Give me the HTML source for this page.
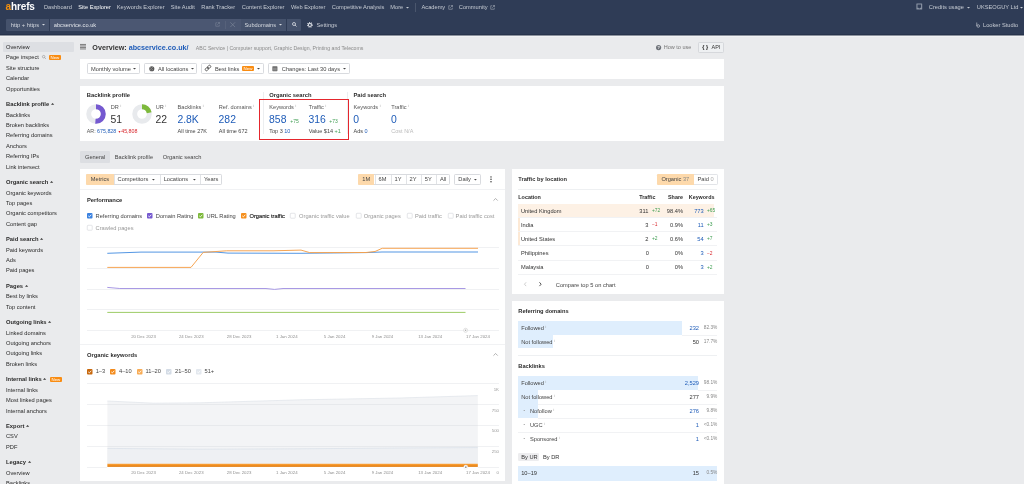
<!DOCTYPE html>
<html><head><meta charset="utf-8">
<style>
*{box-sizing:border-box;margin:0;padding:0}
html,body{width:1024px;height:484px;overflow:hidden;background:#eaebed;font-family:"Liberation Sans",sans-serif;color:#333;font-size:5.7px}
.a{position:absolute}
.t{position:absolute;white-space:nowrap;line-height:8px;height:8px}
.b{font-weight:bold}
.nv{color:#c6cbd3}
.sb{color:#2a2a2a}
.h{font-weight:bold;color:#2b2b2b}
.blue{color:#1f5cb8}
.green{color:#3f9e52}
.red{color:#d8262c}
.gray{color:#999}
.dk{color:#333}
.btn{position:absolute;background:#fff;border:0.6px solid #d9dbdf;border-radius:1.2px}
.badge{position:absolute;background:#f98c12;color:#fff;border-radius:1px;font-size:4.4px;line-height:5.6px;height:5.6px;text-align:center}
.cb{position:absolute;width:5.5px;height:5.5px;border-radius:1px}
.cbo{position:absolute;width:5.5px;height:5.5px;border-radius:1px;border:0.6px solid #cfd2d6;background:#fff}
svg{position:absolute;overflow:visible}
</style></head><body>
<div id="root" style="position:absolute;left:0;top:0;width:1024px;height:484px;will-change:transform">
<div class="a" style="left:0px;top:0px;width:1024.00px;height:35.00px;background:#2f3c56;"></div>
<div class="t b" style="left:5.6px;top:1.6px;font-size:10px;line-height:10px;height:10px;color:#fff;letter-spacing:-0.15px"><span style="color:#f5900c">a</span>hrefs</div>
<div class="t nv" style="left:44px;top:3.20px;">Dashboard</div>
<div class="t nv" style="left:78.3px;top:3.20px;color:#fff">Site Explorer</div>
<div class="t nv" style="left:116.8px;top:3.20px;">Keywords Explorer</div>
<div class="t nv" style="left:170.8px;top:3.20px;">Site Audit</div>
<div class="t nv" style="left:201.3px;top:3.20px;">Rank Tracker</div>
<div class="t nv" style="left:241.8px;top:3.20px;">Content Explorer</div>
<div class="t nv" style="left:291px;top:3.20px;">Web Explorer</div>
<div class="t nv" style="left:331.8px;top:3.20px;">Competitive Analysis</div>
<div class="t nv" style="left:390.3px;top:3.20px;">More</div>
<div class="t nv" style="left:421.5px;top:3.20px;">Academy</div>
<div class="t nv" style="left:458.8px;top:3.20px;">Community</div>
<div class="t nv" style="left:928.8px;top:3.20px;">Credits usage</div>
<div class="t nv" style="left:976.8px;top:3.20px;">UKSEOGUY Ltd</div>
<svg style="left:405.5px;top:7.0px" width="3.0" height="1.6"><path d="M0 0H3.0L1.5 1.6Z" fill="#c6cbd3"/></svg>
<div class="a" style="left:415px;top:3px;width:0.70px;height:9.00px;background:#4a566d;"></div>
<svg style="left:447.8px;top:5px" width="5" height="5" viewBox="0 0 10 10"><path d="M4 1.5H1.5V8.5H8.5V6" fill="none" stroke="#aab0bb" stroke-width="1.1"/><path d="M5.5 1H9V4.5M9 1L4.5 5.5" fill="none" stroke="#aab0bb" stroke-width="1.1"/></svg>
<svg style="left:489.5px;top:5px" width="5" height="5" viewBox="0 0 10 10"><path d="M4 1.5H1.5V8.5H8.5V6" fill="none" stroke="#aab0bb" stroke-width="1.1"/><path d="M5.5 1H9V4.5M9 1L4.5 5.5" fill="none" stroke="#aab0bb" stroke-width="1.1"/></svg>
<svg style="left:967.0px;top:7.0px" width="3.0" height="1.6"><path d="M0 0H3.0L1.5 1.6Z" fill="#c6cbd3"/></svg>
<svg style="left:1020.3px;top:7.0px" width="3.0" height="1.6"><path d="M0 0H3.0L1.5 1.6Z" fill="#c6cbd3"/></svg>
<svg style="left:915.6px;top:3px" width="6.6" height="7" viewBox="0 0 66 70"><path d="M8 4H58Q62 4 62 8V62Q62 66 58 66H8Q4 66 4 62V8Q4 4 8 4Z M15 16V48H24Q26 55 33 55Q40 55 42 48H51V16Z" fill="#8d96a6" fill-rule="evenodd"/></svg>
<div class="a" style="left:6px;top:18.6px;width:43.00px;height:12.00px;background:#45526c;border-radius:1.2px 0 0 1.2px"></div>
<div class="t nv" style="left:10.8px;top:20.50px;color:#d5d9df">http + https</div>
<svg style="left:41.5px;top:23.9px" width="3.0" height="1.6"><path d="M0 0H3.0L1.5 1.6Z" fill="#d5d9df"/></svg>
<div class="a" style="left:49.6px;top:18.6px;width:191.40px;height:12.00px;background:#4b5772;"></div>
<div class="t nv" style="left:53.8px;top:20.50px;color:#e2e5ea">abcservice.co.uk</div>
<svg style="left:214.5px;top:22.3px" width="5" height="5" viewBox="0 0 10 10"><path d="M4 1.5H1.5V8.5H8.5V6" fill="none" stroke="#7d879a" stroke-width="1.1"/><path d="M5.5 1H9V4.5M9 1L4.5 5.5" fill="none" stroke="#7d879a" stroke-width="1.1"/></svg>
<div class="a" style="left:225px;top:21px;width:0.60px;height:7.60px;background:#56617a;"></div>
<svg style="left:229.6px;top:22.2px" width="5.4" height="5.4" viewBox="0 0 8 8"><path d="M0.5 0.5L7.5 7.5M7.5 0.5L0.5 7.5" stroke="#7f899b" stroke-width="0.9"/></svg>
<div class="a" style="left:241.3px;top:18.6px;width:45.00px;height:12.00px;background:#45526c;"></div>
<div class="t nv" style="left:244.5px;top:20.50px;color:#d5d9df">Subdomains</div>
<svg style="left:278.5px;top:23.9px" width="3.0" height="1.6"><path d="M0 0H3.0L1.5 1.6Z" fill="#d5d9df"/></svg>
<div class="a" style="left:286.9px;top:18.6px;width:14.10px;height:12.00px;background:#45526c;border-radius:0 1.2px 1.2px 0"></div>
<svg style="left:291.6px;top:22.2px" width="5" height="5" viewBox="0 0 10 10"><circle cx="4" cy="4" r="3" fill="none" stroke="#e6e8ec" stroke-width="1.5"/><path d="M6.2 6.2L9 9" stroke="#e6e8ec" stroke-width="1.6"/></svg>
<svg style="left:307.3px;top:21.7px" width="5.8" height="5.8" viewBox="0 0 10 10"><circle cx="5" cy="5" r="4.1" fill="none" stroke="#d2d6dd" stroke-width="1.8" stroke-dasharray="1.6 1.62"/><circle cx="5" cy="5" r="2.7" fill="none" stroke="#d2d6dd" stroke-width="2"/></svg>
<div class="t nv" style="left:316.5px;top:20.50px;">Settings</div>
<svg style="left:975.6px;top:21.6px" width="4" height="6" viewBox="0 0 8 12"><circle cx="4.5" cy="8" r="2.6" fill="none" stroke="#c6cbd3" stroke-width="1.3"/><path d="M1.5 1V8" stroke="#c6cbd3" stroke-width="1.3"/></svg>
<div class="t nv" style="left:983px;top:20.50px;">Looker Studio</div>
<div class="a" style="left:0px;top:34px;width:1024.00px;height:1.00px;background:#27334c;"></div>
<div class="a" style="left:0px;top:35px;width:1024.00px;height:1.00px;background:#8d939e;"></div>
<div class="a" style="left:0px;top:36px;width:1024.00px;height:1.00px;background:#f1f2f4;"></div>
<div class="a" style="left:3px;top:42.2px;width:70.50px;height:9.80px;background:#dddfe3;border-radius:1px"></div>
<div class="t sb" style="left:6px;top:43.00px;">Overview</div>
<div class="t sb" style="left:6px;top:53.42px;">Page inspect</div>
<svg style="left:41.8px;top:55.22px" width="4.2" height="4.2" viewBox="0 0 10 10"><circle cx="4" cy="4" r="3" fill="none" stroke="#888" stroke-width="1.3"/><path d="M6.2 6.2L9.2 9.2" stroke="#888" stroke-width="1.4"/></svg>
<div class="badge" style="left:48.8px;top:54.72px;width:12.2px">New</div>
<div class="t sb" style="left:6px;top:63.84px;">Site structure</div>
<div class="t sb" style="left:6px;top:74.26px;">Calendar</div>
<div class="t sb" style="left:6px;top:84.68px;">Opportunities</div>
<div class="t h" style="font-size:5.8px;left:6px;top:100.13px;">Backlink profile<svg style="position:relative;display:inline-block;margin-left:1.6px;top:-1.3px" width="3.2" height="1.8"><path d="M0 1.8H3.2L1.6 0Z" fill="#333"/></svg></div>
<div class="t sb" style="left:6px;top:110.55px;">Backlinks</div>
<div class="t sb" style="left:6px;top:120.97px;">Broken backlinks</div>
<div class="t sb" style="left:6px;top:131.39px;">Referring domains</div>
<div class="t sb" style="left:6px;top:141.81px;">Anchors</div>
<div class="t sb" style="left:6px;top:152.23px;">Referring IPs</div>
<div class="t sb" style="left:6px;top:162.65px;">Link intersect</div>
<div class="t h" style="font-size:5.8px;left:6px;top:178.10px;">Organic search<svg style="position:relative;display:inline-block;margin-left:1.6px;top:-1.3px" width="3.2" height="1.8"><path d="M0 1.8H3.2L1.6 0Z" fill="#333"/></svg></div>
<div class="t sb" style="left:6px;top:188.52px;">Organic keywords</div>
<div class="t sb" style="left:6px;top:198.94px;">Top pages</div>
<div class="t sb" style="left:6px;top:209.36px;">Organic competitors</div>
<div class="t sb" style="left:6px;top:219.78px;">Content gap</div>
<div class="t h" style="font-size:5.8px;left:6px;top:235.23px;">Paid search<svg style="position:relative;display:inline-block;margin-left:1.6px;top:-1.3px" width="3.2" height="1.8"><path d="M0 1.8H3.2L1.6 0Z" fill="#333"/></svg></div>
<div class="t sb" style="left:6px;top:245.65px;">Paid keywords</div>
<div class="t sb" style="left:6px;top:256.07px;">Ads</div>
<div class="t sb" style="left:6px;top:266.49px;">Paid pages</div>
<div class="t h" style="font-size:5.8px;left:6px;top:281.94px;">Pages<svg style="position:relative;display:inline-block;margin-left:1.6px;top:-1.3px" width="3.2" height="1.8"><path d="M0 1.8H3.2L1.6 0Z" fill="#333"/></svg></div>
<div class="t sb" style="left:6px;top:292.36px;">Best by links</div>
<div class="t sb" style="left:6px;top:302.78px;">Top content</div>
<div class="t h" style="font-size:5.8px;left:6px;top:318.23px;">Outgoing links<svg style="position:relative;display:inline-block;margin-left:1.6px;top:-1.3px" width="3.2" height="1.8"><path d="M0 1.8H3.2L1.6 0Z" fill="#333"/></svg></div>
<div class="t sb" style="left:6px;top:328.65px;">Linked domains</div>
<div class="t sb" style="left:6px;top:339.07px;">Outgoing anchors</div>
<div class="t sb" style="left:6px;top:349.49px;">Outgoing links</div>
<div class="t sb" style="left:6px;top:359.91px;">Broken links</div>
<div class="t h" style="font-size:5.8px;left:6px;top:375.36px;">Internal links<svg style="position:relative;display:inline-block;margin-left:1.6px;top:-1.3px" width="3.2" height="1.8"><path d="M0 1.8H3.2L1.6 0Z" fill="#333"/></svg></div>
<div class="badge" style="left:49.8px;top:376.66px;width:12.2px">New</div>
<div class="t sb" style="left:6px;top:385.78px;">Internal links</div>
<div class="t sb" style="left:6px;top:396.20px;">Most linked pages</div>
<div class="t sb" style="left:6px;top:406.62px;">Internal anchors</div>
<div class="t h" style="font-size:5.8px;left:6px;top:422.07px;">Export<svg style="position:relative;display:inline-block;margin-left:1.6px;top:-1.3px" width="3.2" height="1.8"><path d="M0 1.8H3.2L1.6 0Z" fill="#333"/></svg></div>
<div class="t sb" style="left:6px;top:432.49px;">CSV</div>
<div class="t sb" style="left:6px;top:442.91px;">PDF</div>
<div class="t h" style="font-size:5.8px;left:6px;top:458.36px;">Legacy<svg style="position:relative;display:inline-block;margin-left:1.6px;top:-1.3px" width="3.2" height="1.8"><path d="M0 1.8H3.2L1.6 0Z" fill="#333"/></svg></div>
<div class="t sb" style="left:6px;top:468.78px;">Overview</div>
<div class="t sb" style="left:6px;top:479.20px;">Backlinks</div>
<svg style="left:80px;top:44.2px" width="6" height="5.6" viewBox="0 0 60 56"><path d="M0 4.5H60M0 19.5H60M0 34.5H60M0 49.5H60" stroke="#707070" stroke-width="9"/></svg>
<div class="t b" style="left:92.3px;top:43.6px;font-size:7.2px;color:#333">Overview: <span style="color:#1f5cb8">abcservice.co.uk/</span></div>
<div class="t gray" style="font-size:5.2px;left:195.8px;top:43.80px;color:#8a8a8a">ABC Service | Computer support, Graphic Design, Printing and Telecoms</div>
<svg style="left:655.6px;top:44.6px" width="5.2" height="5.2" viewBox="0 0 10 10"><circle cx="5" cy="5" r="5" fill="#6f737a"/><text x="5" y="8" font-size="7.5" font-weight="bold" text-anchor="middle" fill="#fff" font-family="Liberation Sans">?</text></svg>
<div class="t gray" style="font-size:5.5px;left:663.8px;top:43.20px;color:#777">How to use</div>
<div class="btn" style="left:698.3px;top:41.6px;width:25.8px;height:11px;background:#eef0f2;border-color:#d6d8dc"></div>
<div class="t dk" style="font-size:6.2px;left:702.2px;top:43.20px;color:#222;-webkit-text-stroke:0.2px #222">{&nbsp;}</div>
<div class="t dk" style="font-size:5.5px;left:711.5px;top:43.20px;">API</div>
<div class="a" style="left:80px;top:59px;width:644.00px;height:20.00px;background:#fff;"></div>
<div class="btn" style="left:86.5px;top:63.3px;width:53.70px;height:10.30px"></div>
<div class="t dk" style="left:91px;top:64.50px;color:#444">Monthly volume</div>
<svg style="left:133.1px;top:67.8px" width="3.0" height="1.6"><path d="M0 0H3.0L1.5 1.6Z" fill="#444"/></svg>
<div class="btn" style="left:143.7px;top:63.3px;width:53.80px;height:10.30px"></div>
<svg style="left:148.7px;top:65.6px" width="5.6" height="5.6" viewBox="0 0 10 10"><circle cx="5" cy="5" r="4.6" fill="#555"/><path d="M2 3.2Q4 2.5 4.5 4.5T7 7M6 1.5Q5.5 3 7.5 3.5M1.5 6Q3 6 3.5 8" stroke="#ccc" stroke-width="0.8" fill="none"/></svg>
<div class="t dk" style="left:158px;top:64.50px;color:#444">All locations</div>
<svg style="left:190.5px;top:67.8px" width="3.0" height="1.6"><path d="M0 0H3.0L1.5 1.6Z" fill="#444"/></svg>
<div class="btn" style="left:201.3px;top:63.3px;width:63.10px;height:10.30px"></div>
<svg style="left:205.2px;top:65.4px" width="6" height="6" viewBox="0 0 10 10"><g transform="rotate(-45 5 5)"><rect x="-0.6" y="2.9" width="5.8" height="4.2" rx="2.1" fill="none" stroke="#555" stroke-width="1.5"/><rect x="4.8" y="2.9" width="5.8" height="4.2" rx="2.1" fill="none" stroke="#555" stroke-width="1.5"/><path d="M3.6 5H6.4" stroke="#555" stroke-width="1.5"/></g></svg>
<div class="t dk" style="left:215px;top:64.50px;color:#444">Best links</div>
<div class="badge" style="left:242px;top:65.8px;width:12px">New</div>
<svg style="left:256.8px;top:67.8px" width="3.0" height="1.6"><path d="M0 0H3.0L1.5 1.6Z" fill="#444"/></svg>
<div class="btn" style="left:267.8px;top:63.3px;width:82.70px;height:10.30px"></div>
<svg style="left:272px;top:65.8px" width="5.8" height="5.4" viewBox="0 0 10 10"><rect x="0.3" y="0.3" width="9.4" height="9.4" fill="#6a6a6a" rx="1.2"/><rect x="1.6" y="3.2" width="6.8" height="5.2" fill="#8a8a8a"/></svg>
<div class="t dk" style="left:281.8px;top:64.50px;color:#444">Changes: Last 30 days</div>
<svg style="left:343.2px;top:67.8px" width="3.0" height="1.6"><path d="M0 0H3.0L1.5 1.6Z" fill="#444"/></svg>
<div class="a" style="left:80px;top:85.5px;width:644.00px;height:55.20px;background:#fff;"></div>
<div class="t h" style="font-size:5.8px;left:86.8px;top:91.40px;">Backlink profile</div>
<svg style="left:86.45px;top:104.1px" width="20" height="20" viewBox="0 0 20 20"><circle cx="10" cy="10" r="7.3" fill="none" stroke="#e8eaed" stroke-width="4.9"/><circle cx="10" cy="10" r="7.3" fill="none" stroke="#7559d0" stroke-width="4.9" stroke-dasharray="23.392 45.867" transform="rotate(-90 10 10)"/></svg>
<svg style="left:131.85px;top:104.1px" width="20" height="20" viewBox="0 0 20 20"><circle cx="10" cy="10" r="7.3" fill="none" stroke="#e8eaed" stroke-width="4.9"/><circle cx="10" cy="10" r="7.3" fill="none" stroke="#7db93b" stroke-width="4.9" stroke-dasharray="10.091 45.867" transform="rotate(-90 10 10)"/></svg>
<div class="t" style="font-size:5.6px;left:110.7px;top:103.00px;color:#555">DR<span style="font-size:3.3px;position:relative;top:-2px;margin-left:1.6px;color:#999">i</span></div>
<div class="t" style="left:110.5px;top:114.00px;font-size:10.4px;line-height:12px;height:12px;color:#333">51</div>
<div class="t" style="font-size:5.6px;left:155.8px;top:103.00px;color:#555">UR<span style="font-size:3.3px;position:relative;top:-2px;margin-left:1.6px;color:#999">i</span></div>
<div class="t" style="left:155.6px;top:114.00px;font-size:10.4px;line-height:12px;height:12px;color:#333">22</div>
<div class="t" style="font-size:5.3px;left:86.8px;top:127.30px;color:#555">AR: <span style="color:#1f5cb8">675,828</span> <span style="color:#d8262c"><span style="font-size:3.5px;vertical-align:0.5px">&#9660;</span>45,808</span></div>
<div class="t" style="font-size:5.6px;left:177.6px;top:103.00px;color:#555">Backlinks<span style="font-size:3.3px;position:relative;top:-2px;margin-left:1.6px;color:#999">i</span></div>
<div class="t" style="left:177.4px;top:114.00px;font-size:10.4px;line-height:12px;height:12px;color:#1f5cb8">2.8K</div>
<div class="t" style="font-size:5.5px;left:177.6px;top:127.30px;color:#444">All time 27K</div>
<div class="t" style="font-size:5.6px;left:218.8px;top:103.00px;color:#555">Ref. domains<span style="font-size:3.3px;position:relative;top:-2px;margin-left:1.6px;color:#999">i</span></div>
<div class="t" style="left:218.6px;top:114.00px;font-size:10.4px;line-height:12px;height:12px;color:#1f5cb8">282</div>
<div class="t" style="font-size:5.5px;left:218.8px;top:127.30px;color:#444">All time 672</div>
<div class="a" style="left:262.5px;top:91.5px;width:0.60px;height:42.50px;background:#eceef0;"></div>
<div class="t h" style="font-size:5.8px;left:269.3px;top:91.40px;">Organic search</div>
<div class="t" style="font-size:5.6px;left:269.3px;top:103.00px;color:#555">Keywords<span style="font-size:3.3px;position:relative;top:-2px;margin-left:1.6px;color:#999">i</span></div>
<div class="t" style="left:269.1px;top:114.00px;font-size:10.4px;line-height:12px;height:12px;color:#1f5cb8">858</div>
<div class="t green" style="font-size:5.0px;left:290.3px;top:116.60px;">+75</div>
<div class="t" style="font-size:5.5px;left:269.3px;top:127.30px;color:#444">Top 3 <span style="color:#1f5cb8">10</span></div>
<div class="t" style="font-size:5.6px;left:308.7px;top:103.00px;color:#555">Traffic<span style="font-size:3.3px;position:relative;top:-2px;margin-left:1.6px;color:#999">i</span></div>
<div class="t" style="left:308.5px;top:114.00px;font-size:10.4px;line-height:12px;height:12px;color:#1f5cb8">316</div>
<div class="t green" style="font-size:5.0px;left:329.3px;top:116.60px;">+73</div>
<div class="t" style="font-size:5.5px;left:308.7px;top:127.30px;color:#444">Value $14 <span style="color:#3f9e52">+1</span></div>
<div class="a" style="left:346.5px;top:91.5px;width:0.60px;height:42.50px;background:#eceef0;"></div>
<div class="a" style="left:259.1px;top:98.8px;width:89.7px;height:41.7px;border:1.9px solid #e5262d"></div>
<div class="t h" style="font-size:5.8px;left:353.5px;top:91.40px;">Paid search</div>
<div class="t" style="font-size:5.6px;left:353.5px;top:103.00px;color:#555">Keywords<span style="font-size:3.3px;position:relative;top:-2px;margin-left:1.6px;color:#999">i</span></div>
<div class="t" style="left:353.3px;top:114.00px;font-size:10.4px;line-height:12px;height:12px;color:#1f5cb8">0</div>
<div class="t" style="font-size:5.5px;left:353.5px;top:127.30px;color:#444">Ads <span style="color:#1f5cb8">0</span></div>
<div class="t" style="font-size:5.6px;left:391.3px;top:103.00px;color:#555">Traffic<span style="font-size:3.3px;position:relative;top:-2px;margin-left:1.6px;color:#999">i</span></div>
<div class="t" style="left:391.1px;top:114.00px;font-size:10.4px;line-height:12px;height:12px;color:#1f5cb8">0</div>
<div class="t" style="font-size:5.5px;left:391.3px;top:127.30px;color:#bbb">Cost N/A</div>
<div class="a" style="left:80px;top:151px;width:30.00px;height:11.80px;background:#dcdee2;border-radius:1.2px"></div>
<div class="t dk" style="left:85px;top:153.00px;color:#444">General</div>
<div class="t dk" style="left:114.8px;top:153.00px;color:#444">Backlink profile</div>
<div class="t dk" style="left:162.8px;top:153.00px;color:#444">Organic search</div>
<div class="a" style="left:80px;top:169.2px;width:425.00px;height:311.40px;background:#fff;"></div>
<div class="btn" style="left:86.3px;top:174.3px;width:136.20px;height:10.30px"></div>
<div class="a" style="left:86.3px;top:174.3px;width:27.30px;height:10.30px;background:#fdd9ab;border-radius:1.2px 0 0 1.2px"></div>
<div class="t" style="left:-0.05000000000001137px;width:200px;text-align:center;top:175.45px;color:#444">Metrics</div>
<div class="a" style="left:113.6px;top:174.60000000000002px;width:0.60px;height:9.70px;background:#e1e3e6;"></div>
<div class="t" style="left:117.6px;top:175.45px;color:#444">Competitors</div>
<svg style="left:152.39999999999998px;top:178.89999999999998px" width="2.8" height="1.5"><path d="M0 0H2.8L1.4 1.5Z" fill="#444"/></svg>
<div class="a" style="left:159.7px;top:174.60000000000002px;width:0.60px;height:9.70px;background:#e1e3e6;"></div>
<div class="t" style="left:163.7px;top:175.45px;color:#444">Locations</div>
<svg style="left:192.5px;top:178.89999999999998px" width="2.8" height="1.5"><path d="M0 0H2.8L1.4 1.5Z" fill="#444"/></svg>
<div class="a" style="left:199.8px;top:174.60000000000002px;width:0.60px;height:9.70px;background:#e1e3e6;"></div>
<div class="t" style="left:111.15px;width:200px;text-align:center;top:175.45px;color:#444">Years</div>
<div class="btn" style="left:358.1px;top:174.3px;width:92.40px;height:10.30px"></div>
<div class="a" style="left:358.1px;top:174.3px;width:16.40px;height:10.30px;background:#fdd9ab;border-radius:1.2px 0 0 1.2px"></div>
<div class="t" style="left:266.3px;width:200px;text-align:center;top:175.45px;color:#444">1M</div>
<div class="a" style="left:374.5px;top:174.60000000000002px;width:0.60px;height:9.70px;background:#e1e3e6;"></div>
<div class="t" style="left:282.55px;width:200px;text-align:center;top:175.45px;color:#444">6M</div>
<div class="a" style="left:390.6px;top:174.60000000000002px;width:0.60px;height:9.70px;background:#e1e3e6;"></div>
<div class="t" style="left:298.05px;width:200px;text-align:center;top:175.45px;color:#444">1Y</div>
<div class="a" style="left:405.5px;top:174.60000000000002px;width:0.60px;height:9.70px;background:#e1e3e6;"></div>
<div class="t" style="left:313.05px;width:200px;text-align:center;top:175.45px;color:#444">2Y</div>
<div class="a" style="left:420.6px;top:174.60000000000002px;width:0.60px;height:9.70px;background:#e1e3e6;"></div>
<div class="t" style="left:328.25px;width:200px;text-align:center;top:175.45px;color:#444">5Y</div>
<div class="a" style="left:435.9px;top:174.60000000000002px;width:0.60px;height:9.70px;background:#e1e3e6;"></div>
<div class="t" style="left:343.2px;width:200px;text-align:center;top:175.45px;color:#444">All</div>
<div class="btn" style="left:454.4px;top:174.3px;width:26.20px;height:10.30px"></div>
<div class="t" style="left:458.3px;top:175.45px;color:#444">Daily</div>
<svg style="left:473.8px;top:178.85px" width="2.8" height="1.5"><path d="M0 0H2.8L1.4 1.5Z" fill="#444"/></svg>
<svg style="left:490.4px;top:176.2px" width="2" height="6.6" viewBox="0 0 2 6.6"><circle cx="1" cy="0.9" r="0.72" fill="#333"/><circle cx="1" cy="3.3" r="0.72" fill="#333"/><circle cx="1" cy="5.7" r="0.72" fill="#333"/></svg>
<div class="a" style="left:80px;top:188.9px;width:425.00px;height:0.60px;background:#f1f2f4;"></div>
<div class="t h" style="font-size:5.8px;left:86.9px;top:196.00px;">Performance</div>
<svg style="left:492.59999999999997px;top:198.1px" width="5.2" height="3" viewBox="0 0 10 6"><path d="M0.8 5.2L5 1L9.2 5.2" fill="none" stroke="#999" stroke-width="1.5"/></svg>
<svg style="left:86.6px;top:213.25px" width="5.5" height="5.5" viewBox="0 0 10 10"><rect width="10" height="10" rx="1.6" fill="#3b82e0"/><path d="M2.3 5.2L4.2 7.1L7.8 3.2" fill="none" stroke="#fff" stroke-width="1.5"/></svg>
<div class="t" style="left:95.6px;top:212.00px;color:#444">Referring domains</div>
<svg style="left:146.9px;top:213.25px" width="5.5" height="5.5" viewBox="0 0 10 10"><rect width="10" height="10" rx="1.6" fill="#7559d0"/><path d="M2.3 5.2L4.2 7.1L7.8 3.2" fill="none" stroke="#fff" stroke-width="1.5"/></svg>
<div class="t" style="left:155.8px;top:212.00px;color:#444">Domain Rating</div>
<svg style="left:198px;top:213.25px" width="5.5" height="5.5" viewBox="0 0 10 10"><rect width="10" height="10" rx="1.6" fill="#7db93b"/><path d="M2.3 5.2L4.2 7.1L7.8 3.2" fill="none" stroke="#fff" stroke-width="1.5"/></svg>
<div class="t" style="left:206.6px;top:212.00px;color:#444">URL Rating</div>
<svg style="left:240.8px;top:213.25px" width="5.5" height="5.5" viewBox="0 0 10 10"><rect width="10" height="10" rx="1.6" fill="#f5901e"/><path d="M2.3 5.2L4.2 7.1L7.8 3.2" fill="none" stroke="#fff" stroke-width="1.5"/></svg>
<div class="t" style="left:249.5px;top:212.00px;color:#1a1a1a;-webkit-text-stroke:0.15px #1a1a1a">Organic traffic</div>
<svg style="left:290.4px;top:213.25px" width="5.5" height="5.5" viewBox="0 0 10 10"><rect x="0.5" y="0.5" width="9" height="9" rx="1.4" fill="#fff" stroke="#cfd2d6" stroke-width="1"/></svg>
<div class="t" style="left:299.1px;top:212.00px;color:#999">Organic traffic value</div>
<svg style="left:355.6px;top:213.25px" width="5.5" height="5.5" viewBox="0 0 10 10"><rect x="0.5" y="0.5" width="9" height="9" rx="1.4" fill="#fff" stroke="#cfd2d6" stroke-width="1"/></svg>
<div class="t" style="left:363.8px;top:212.00px;color:#999">Organic pages</div>
<svg style="left:406.5px;top:213.25px" width="5.5" height="5.5" viewBox="0 0 10 10"><rect x="0.5" y="0.5" width="9" height="9" rx="1.4" fill="#fff" stroke="#cfd2d6" stroke-width="1"/></svg>
<div class="t" style="left:415px;top:212.00px;color:#999">Paid traffic</div>
<svg style="left:447.7px;top:213.25px" width="5.5" height="5.5" viewBox="0 0 10 10"><rect x="0.5" y="0.5" width="9" height="9" rx="1.4" fill="#fff" stroke="#cfd2d6" stroke-width="1"/></svg>
<div class="t" style="left:455.6px;top:212.00px;color:#999">Paid traffic cost</div>
<svg style="left:86.6px;top:225.35px" width="5.5" height="5.5" viewBox="0 0 10 10"><rect x="0.5" y="0.5" width="9" height="9" rx="1.4" fill="#fff" stroke="#cfd2d6" stroke-width="1"/></svg>
<div class="t" style="left:95.6px;top:223.80px;color:#999">Crawled pages</div>
<div class="a" style="left:86.8px;top:247.1px;width:412.00px;height:0.60px;background:#f0f1f3;"></div>
<div class="a" style="left:86.8px;top:268.2px;width:412.00px;height:0.60px;background:#f0f1f3;"></div>
<div class="a" style="left:86.8px;top:288.9px;width:412.00px;height:0.60px;background:#f0f1f3;"></div>
<div class="a" style="left:86.8px;top:309.3px;width:412.00px;height:0.60px;background:#f0f1f3;"></div>
<div class="a" style="left:86.8px;top:329.8px;width:412.00px;height:0.60px;background:#f0f1f3;"></div>
<div class="t" style="font-size:4.35px;left:43.5px;width:200px;text-align:center;top:332.80px;color:#8f8f8f">20 Dec 2023</div>
<div class="t" style="font-size:4.35px;left:91.28px;width:200px;text-align:center;top:332.80px;color:#8f8f8f">24 Dec 2023</div>
<div class="t" style="font-size:4.35px;left:139.06px;width:200px;text-align:center;top:332.80px;color:#8f8f8f">28 Dec 2023</div>
<div class="t" style="font-size:4.35px;left:186.84000000000003px;width:200px;text-align:center;top:332.80px;color:#8f8f8f">1 Jan 2024</div>
<div class="t" style="font-size:4.35px;left:234.62px;width:200px;text-align:center;top:332.80px;color:#8f8f8f">5 Jan 2024</div>
<div class="t" style="font-size:4.35px;left:282.4px;width:200px;text-align:center;top:332.80px;color:#8f8f8f">9 Jan 2024</div>
<div class="t" style="font-size:4.35px;left:330.18px;width:200px;text-align:center;top:332.80px;color:#8f8f8f">13 Jan 2024</div>
<div class="t" style="font-size:4.35px;left:377.96000000000004px;width:200px;text-align:center;top:332.80px;color:#8f8f8f">17 Jan 2024</div>
<svg style="left:0;top:0" width="1024" height="484" viewBox="0 0 1024 484">
<polyline fill="none" stroke="#4a90e2" stroke-width="0.95" points="107.3,253.3 141,252.1 216,252.1 228,253.1 300,253.3 366,252.6 382,252 478,252"/>
<polyline fill="none" stroke="#f5a04a" stroke-width="0.95" points="107.3,267.4 191,267.4 203.2,252.4 226.6,250.8 273,250.8 301,250.1 309.7,252.6 366,252.5 375,251.5 382.2,248.3 478,248.3"/>
<polyline fill="none" stroke="#a393e3" stroke-width="0.95" points="107.3,287.4 119.8,288.5 266,288.5 274.5,289.4 283,288.5 465.5,288.5"/>
<polyline fill="none" stroke="#98c95e" stroke-width="0.95" points="107.3,312.4 465.5,312.4"/>
<circle cx="465.6" cy="330.3" r="2" fill="#fff" stroke="#bbb" stroke-width="0.45"/>
<circle cx="465.6" cy="330.3" r="0.8" fill="#aaa"/>
</svg>
<div class="a" style="left:80px;top:344.3px;width:425.00px;height:0.60px;background:#f1f2f4;"></div>
<div class="t h" style="font-size:5.8px;left:86.9px;top:351.30px;">Organic keywords</div>
<svg style="left:492.59999999999997px;top:353.3px" width="5.2" height="3" viewBox="0 0 10 6"><path d="M0.8 5.2L5 1L9.2 5.2" fill="none" stroke="#999" stroke-width="1.5"/></svg>
<svg style="left:86.5px;top:368.55px" width="5.5" height="5.5" viewBox="0 0 10 10"><rect width="10" height="10" rx="1.6" fill="#c8690e"/><path d="M2.3 5.2L4.2 7.1L7.8 3.2" fill="none" stroke="#fff" stroke-width="1.5"/></svg>
<div class="t" style="left:95.7px;top:367.30px;color:#444">1–3</div>
<svg style="left:110px;top:368.55px" width="5.5" height="5.5" viewBox="0 0 10 10"><rect width="10" height="10" rx="1.6" fill="#f38b1c"/><path d="M2.3 5.2L4.2 7.1L7.8 3.2" fill="none" stroke="#fff" stroke-width="1.5"/></svg>
<div class="t" style="left:119px;top:367.30px;color:#444">4–10</div>
<svg style="left:136.5px;top:368.55px" width="5.5" height="5.5" viewBox="0 0 10 10"><rect width="10" height="10" rx="1.6" fill="#f8ac56"/><path d="M2.3 5.2L4.2 7.1L7.8 3.2" fill="none" stroke="#fff" stroke-width="1.5"/></svg>
<div class="t" style="left:145.5px;top:367.30px;color:#444">11–20</div>
<svg style="left:166px;top:368.55px" width="5.5" height="5.5" viewBox="0 0 10 10"><rect width="10" height="10" rx="1.6" fill="#d3dbe5"/><path d="M2.3 5.2L4.2 7.1L7.8 3.2" fill="none" stroke="#fff" stroke-width="1.5"/></svg>
<div class="t" style="left:175px;top:367.30px;color:#444">21–50</div>
<svg style="left:195.5px;top:368.55px" width="5.5" height="5.5" viewBox="0 0 10 10"><rect width="10" height="10" rx="1.6" fill="#e3e8ee"/><path d="M2.3 5.2L4.2 7.1L7.8 3.2" fill="none" stroke="#fff" stroke-width="1.5"/></svg>
<div class="t" style="left:204.5px;top:367.30px;color:#444">51+</div>
<svg style="left:0;top:0" width="1024" height="484" viewBox="0 0 1024 484">
<path d="M107.4 401 L154 403.2 L200 402.8 L301 399.8 L400 398 L477.8 395.6 L477.8 466.8 L107.4 466.8Z" fill="#f3f4f6"/>
<path d="M107.4 401 L154 403.2 L200 402.8 L301 399.8 L400 398 L477.8 395.6" fill="none" stroke="#dfe4ea" stroke-width="0.7"/>
<path d="M107.4 448.4 L200 449.2 L300 448.8 L400 448 L477.8 447.6 L477.8 466.8 L107.4 466.8Z" fill="#eef0f3"/>
<path d="M107.4 448.4 L200 449.2 L300 448.8 L400 448 L477.8 447.6" fill="none" stroke="#d9e0e8" stroke-width="0.7"/>
<defs><linearGradient id="og" x1="0" y1="0" x2="0" y2="1"><stop offset="0" stop-color="#fab05a"/><stop offset="0.35" stop-color="#f5921f"/><stop offset="1" stop-color="#e0801a"/></linearGradient></defs>
<rect x="107.4" y="463.7" width="370.4" height="3.2" fill="url(#og)"/>
<circle cx="465.8" cy="467.2" r="2.1" fill="#fff" stroke="#e6e6e6" stroke-width="0.4"/>
<circle cx="465.8" cy="467.2" r="0.9" fill="#999"/>
</svg>
<div class="a" style="left:86.8px;top:383.2px;width:412.20px;height:0.60px;background:rgba(200,205,212,0.28);"></div>
<div class="a" style="left:86.8px;top:403.9px;width:412.20px;height:0.60px;background:rgba(200,205,212,0.28);"></div>
<div class="a" style="left:86.8px;top:424.7px;width:412.20px;height:0.60px;background:rgba(200,205,212,0.28);"></div>
<div class="a" style="left:86.8px;top:445.8px;width:412.20px;height:0.60px;background:rgba(200,205,212,0.28);"></div>
<div class="a" style="left:86.8px;top:466.5px;width:20.60px;height:0.60px;background:#f0f1f3;"></div>
<div class="a" style="left:477.8px;top:466.5px;width:21.20px;height:0.60px;background:#f0f1f3;"></div>
<div class="t" style="font-size:4.35px;left:43.5px;width:200px;text-align:center;top:469.10px;color:#8f8f8f">20 Dec 2023</div>
<div class="t" style="font-size:4.35px;left:91.28px;width:200px;text-align:center;top:469.10px;color:#8f8f8f">24 Dec 2023</div>
<div class="t" style="font-size:4.35px;left:139.06px;width:200px;text-align:center;top:469.10px;color:#8f8f8f">28 Dec 2023</div>
<div class="t" style="font-size:4.35px;left:186.84000000000003px;width:200px;text-align:center;top:469.10px;color:#8f8f8f">1 Jan 2024</div>
<div class="t" style="font-size:4.35px;left:234.62px;width:200px;text-align:center;top:469.10px;color:#8f8f8f">5 Jan 2024</div>
<div class="t" style="font-size:4.35px;left:282.4px;width:200px;text-align:center;top:469.10px;color:#8f8f8f">9 Jan 2024</div>
<div class="t" style="font-size:4.35px;left:330.18px;width:200px;text-align:center;top:469.10px;color:#8f8f8f">13 Jan 2024</div>
<div class="t" style="font-size:4.35px;left:377.96000000000004px;width:200px;text-align:center;top:469.10px;color:#8f8f8f">17 Jan 2024</div>
<div class="t" style="font-size:4.35px;left:299px;width:200px;text-align:right;top:385.80px;color:#999">1K</div>
<div class="t" style="font-size:4.35px;left:299px;width:200px;text-align:right;top:406.50px;color:#999">750</div>
<div class="t" style="font-size:4.35px;left:299px;width:200px;text-align:right;top:427.20px;color:#999">500</div>
<div class="t" style="font-size:4.35px;left:299px;width:200px;text-align:right;top:448.10px;color:#999">250</div>
<div class="t" style="font-size:4.35px;left:299px;width:200px;text-align:right;top:469.00px;color:#999">0</div>
<div class="a" style="left:511.7px;top:169px;width:212.10px;height:125.00px;background:#fff;"></div>
<div class="t h" style="font-size:5.7px;left:518.3px;top:175.30px;">Traffic by location</div>
<div class="btn" style="left:657.1px;top:174.3px;width:60.9px;height:10.3px;border-color:#e2e4e8"></div>
<div class="a" style="left:657.1px;top:174.3px;width:36.50px;height:10.30px;background:#fdd9ab;border-radius:1.2px 0 0 1.2px"></div>
<div class="t" style="left:575.3px;width:200px;text-align:center;top:175.45px;color:#444">Organic <span style="color:#888">37</span></div>
<div class="t" style="left:605.5px;width:200px;text-align:center;top:175.45px;color:#444">Paid <span style="color:#aaa">0</span></div>
<div class="a" style="left:518.2px;top:189.2px;width:199.30px;height:0.60px;background:#eef0f2;"></div>
<div class="t h" style="font-size:5.4px;left:518.3px;top:192.90px;">Location</div>
<div class="t h" style="font-size:5.4px;left:455.4px;width:200px;text-align:right;top:192.90px;">Traffic</div>
<div class="t h" style="font-size:5.4px;left:483px;width:200px;text-align:right;top:192.90px;">Share</div>
<div class="t h" style="font-size:5.4px;left:514.5px;width:200px;text-align:right;top:192.90px;">Keywords</div>
<div class="a" style="left:518.2px;top:203.5px;width:196.30px;height:14.20px;background:#fdf1e5;"></div>
<div class="a" style="left:518.2px;top:217.7px;width:1.90px;height:14.10px;background:#fde9d5;"></div>
<div class="a" style="left:518.2px;top:231.8px;width:1.40px;height:14.00px;background:#fde9d5;"></div>
<div class="t" style="left:521px;top:206.60px;color:#333">United Kingdom</div>
<div class="t" style="left:448.4px;width:200px;text-align:right;top:206.60px;color:#333">311</div>
<div class="t green" style="font-size:4.9px;left:651.9px;top:207.30px;">+72</div>
<div class="t" style="left:483px;width:200px;text-align:right;top:206.60px;color:#333">98.4%</div>
<div class="t blue" style="left:503.70000000000005px;width:200px;text-align:right;top:206.60px;">773</div>
<div class="t green" style="font-size:4.9px;left:707px;top:207.30px;">+65</div>
<div class="t" style="left:521px;top:220.68px;color:#333">India</div>
<div class="t" style="left:448.4px;width:200px;text-align:right;top:220.68px;color:#333">3</div>
<div class="t red" style="font-size:4.9px;left:651.9px;top:221.38px;">−1</div>
<div class="t" style="left:483px;width:200px;text-align:right;top:220.68px;color:#333">0.9%</div>
<div class="t blue" style="left:503.70000000000005px;width:200px;text-align:right;top:220.68px;">11</div>
<div class="t green" style="font-size:4.9px;left:707px;top:221.38px;">+3</div>
<div class="a" style="left:518.2px;top:217.33px;width:199.30px;height:0.60px;background:#f1f2f4;"></div>
<div class="t" style="left:521px;top:234.76px;color:#333">United States</div>
<div class="t" style="left:448.4px;width:200px;text-align:right;top:234.76px;color:#333">2</div>
<div class="t green" style="font-size:4.9px;left:651.9px;top:235.46px;">+2</div>
<div class="t" style="left:483px;width:200px;text-align:right;top:234.76px;color:#333">0.6%</div>
<div class="t blue" style="left:503.70000000000005px;width:200px;text-align:right;top:234.76px;">54</div>
<div class="t green" style="font-size:4.9px;left:707px;top:235.46px;">+7</div>
<div class="a" style="left:518.2px;top:231.41px;width:199.30px;height:0.60px;background:#f1f2f4;"></div>
<div class="t" style="left:521px;top:248.84px;color:#333">Philippines</div>
<div class="t" style="left:449px;width:200px;text-align:right;top:248.84px;color:#333">0</div>
<div class="t" style="left:483px;width:200px;text-align:right;top:248.84px;color:#333">0%</div>
<div class="t blue" style="left:503.70000000000005px;width:200px;text-align:right;top:248.84px;">3</div>
<div class="t red" style="font-size:4.9px;left:707px;top:249.54px;">−2</div>
<div class="a" style="left:518.2px;top:245.49px;width:199.30px;height:0.60px;background:#f1f2f4;"></div>
<div class="t" style="left:521px;top:262.92px;color:#333">Malaysia</div>
<div class="t" style="left:449px;width:200px;text-align:right;top:262.92px;color:#333">0</div>
<div class="t" style="left:483px;width:200px;text-align:right;top:262.92px;color:#333">0%</div>
<div class="t blue" style="left:503.70000000000005px;width:200px;text-align:right;top:262.92px;">3</div>
<div class="t green" style="font-size:4.9px;left:707px;top:263.62px;">+2</div>
<div class="a" style="left:518.2px;top:259.57px;width:199.30px;height:0.60px;background:#f1f2f4;"></div>
<div class="a" style="left:518.2px;top:273.65px;width:199.30px;height:0.60px;background:#f1f2f4;"></div>
<svg style="left:523.6px;top:282.3px" width="2.6" height="4.4" viewBox="0 0 5 9"><path d="M4.2 0.6L0.8 4.5L4.2 8.4" fill="none" stroke="#aaa" stroke-width="1.2"/></svg>
<svg style="left:538.8px;top:282.3px" width="2.6" height="4.4" viewBox="0 0 5 9"><path d="M0.8 0.6L4.2 4.5L0.8 8.4" fill="none" stroke="#333" stroke-width="1.7"/></svg>
<div class="t" style="left:555.8px;top:280.60px;color:#444">Compare top 5 on chart</div>
<div class="a" style="left:511.7px;top:300.8px;width:212.10px;height:183.20px;background:#fff;"></div>
<div class="t h" style="font-size:5.7px;left:518.3px;top:307.00px;">Referring domains</div>
<div class="a" style="left:518.2px;top:321.1px;width:163.70px;height:13.60px;background:#dfeefd;"></div>
<div class="a" style="left:518.2px;top:334.7px;width:35.20px;height:13.70px;background:#dfeefd;"></div>
<div class="a" style="left:681.9px;top:334.5px;width:35.60px;height:0.50px;background:#f1f2f4;"></div>
<div class="t" style="left:521.2px;top:323.90px;color:#444">Followed<span style="font-size:3.3px;position:relative;top:-2px;margin-left:1.6px;color:#999">i</span></div>
<div class="t blue" style="left:499px;width:200px;text-align:right;top:323.90px;">232</div>
<div class="t" style="font-size:4.8px;left:517.4px;width:200px;text-align:right;top:323.90px;color:#888">82.3%</div>
<div class="t" style="left:521.2px;top:337.60px;color:#444">Not followed<span style="font-size:3.3px;position:relative;top:-2px;margin-left:1.6px;color:#999">i</span></div>
<div class="t" style="left:499px;width:200px;text-align:right;top:337.60px;color:#333">50</div>
<div class="t" style="font-size:4.8px;left:517.4px;width:200px;text-align:right;top:337.60px;color:#888">17.7%</div>
<div class="a" style="left:518.2px;top:354.9px;width:199.30px;height:0.60px;background:#eef0f2;"></div>
<div class="t h" style="font-size:5.7px;left:518.3px;top:362.10px;">Backlinks</div>
<div class="a" style="left:518.2px;top:376.4px;width:179.50px;height:13.60px;background:#dfeefd;"></div>
<div class="a" style="left:518.2px;top:390px;width:19.60px;height:28.30px;background:#dfeefd;"></div>
<div class="a" style="left:537.8px;top:403.95px;width:179.70px;height:0.55px;background:#f1f2f4;"></div>
<div class="a" style="left:537.8px;top:418.05px;width:179.70px;height:0.55px;background:#f1f2f4;"></div>
<div class="a" style="left:518.2px;top:432.15px;width:199.30px;height:0.55px;background:#f1f2f4;"></div>
<div class="a" style="left:697.7px;top:389.8px;width:19.80px;height:0.50px;background:#f1f2f4;"></div>
<div class="t" style="left:521.2px;top:379.10px;color:#444">Followed<span style="font-size:3.3px;position:relative;top:-2px;margin-left:1.6px;color:#999">i</span></div>
<div class="t blue" style="left:499px;width:200px;text-align:right;top:379.10px;">2,529</div>
<div class="t" style="font-size:4.8px;left:517.4px;width:200px;text-align:right;top:379.10px;color:#888">98.1%</div>
<div class="t" style="left:521.2px;top:393.10px;color:#444">Not followed<span style="font-size:3.3px;position:relative;top:-2px;margin-left:1.6px;color:#999">i</span></div>
<div class="t" style="left:499px;width:200px;text-align:right;top:393.10px;color:#333">277</div>
<div class="t" style="font-size:4.8px;left:517.4px;width:200px;text-align:right;top:393.10px;color:#888">9.9%</div>
<div class="t" style="font-size:4px;left:523.6px;top:407.20px;color:#888">•</div>
<div class="t" style="left:530px;top:407.20px;color:#444">Nofollow<span style="font-size:3.3px;position:relative;top:-2px;margin-left:1.6px;color:#999">i</span></div>
<div class="t blue" style="left:499px;width:200px;text-align:right;top:407.20px;">276</div>
<div class="t" style="font-size:4.8px;left:517.4px;width:200px;text-align:right;top:407.20px;color:#888">9.8%</div>
<div class="t" style="font-size:4px;left:523.6px;top:421.20px;color:#888">•</div>
<div class="t" style="left:530px;top:421.20px;color:#444">UGC<span style="font-size:3.3px;position:relative;top:-2px;margin-left:1.6px;color:#999">i</span></div>
<div class="t blue" style="left:499px;width:200px;text-align:right;top:421.20px;">1</div>
<div class="t" style="font-size:4.8px;left:517.4px;width:200px;text-align:right;top:421.20px;color:#888">&lt;0.1%</div>
<div class="t" style="font-size:4px;left:523.6px;top:435.40px;color:#888">•</div>
<div class="t" style="left:530px;top:435.40px;color:#444">Sponsored<span style="font-size:3.3px;position:relative;top:-2px;margin-left:1.6px;color:#999">i</span></div>
<div class="t blue" style="left:499px;width:200px;text-align:right;top:435.40px;">1</div>
<div class="t" style="font-size:4.8px;left:517.4px;width:200px;text-align:right;top:435.40px;color:#888">&lt;0.1%</div>
<div class="a" style="left:518.2px;top:453.2px;width:21.20px;height:8.20px;background:#ededef;border-radius:1.2px"></div>
<div class="t" style="left:521.2px;top:453.40px;color:#333">By UR</div>
<div class="t" style="left:543px;top:453.40px;color:#333">By DR</div>
<div class="a" style="left:518.2px;top:466.1px;width:199.30px;height:14.60px;background:#dfeefd;"></div>
<div class="t" style="left:521.2px;top:469.30px;color:#333">10–19</div>
<div class="t" style="left:499px;width:200px;text-align:right;top:469.30px;color:#333">15</div>
<div class="t" style="font-size:4.8px;left:517.4px;width:200px;text-align:right;top:469.30px;color:#888">0.5%</div>
</div>
</body></html>
